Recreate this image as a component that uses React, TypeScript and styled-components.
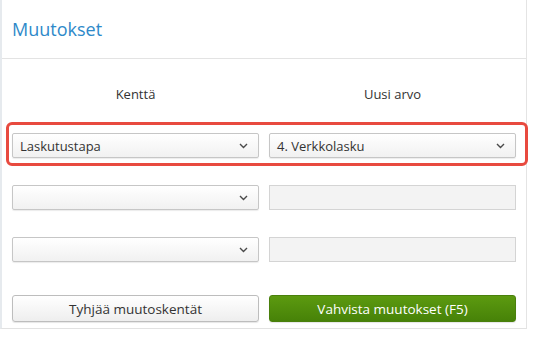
import React, { FC } from 'react';
import styled, { createGlobalStyle } from 'styled-components';

const GlobalStyle = createGlobalStyle`
    html, body {
        margin: 0;
        padding: 0;
        background: #ffffff;
    }
    body {
        font-family: "Open Sans", "Noto Sans", sans-serif;
        color: #333333;
    }
`

const Chevron: FC = () => (
    <svg width="9" height="6" viewBox="0 0 9 6">
        <path d="M1 1 L4.5 4.5 L8 1" fill="none" stroke="#4a4a4a" strokeWidth="1.4" />
    </svg>
)

type SelectProps = { value?: string }

const Select: FC<SelectProps> = ({ value }) => (
    <SelectStyled>
        <SelectText>{value}</SelectText>
        <Chevron />
    </SelectStyled>
)

export const App: FC = () => {
    const rows = [
        { field: 'Laskutustapa', value: '4. Verkkolasku', highlight: true },
        { field: '', value: '', highlight: false },
        { field: '', value: '', highlight: false },
    ]

    return (<>
        <GlobalStyle />
        <PanelStyled>
            <HeaderStyled>
                <TitleStyled>Muutokset</TitleStyled>
            </HeaderStyled>

            <BodyStyled>
                <ColumnHeads>
                    <span>Kenttä</span>
                    <span>Uusi arvo</span>
                </ColumnHeads>

                {rows.map((row, i) => (
                    <RowStyled key={i} $highlight={row.highlight}>
                        <Select value={row.field} />
                        {row.value ? <Select value={row.value} /> : <InputStyled />}
                    </RowStyled>
                ))}

                <ButtonRow>
                    <ButtonStyled>Tyhjää muutoskentät</ButtonStyled>
                    <ButtonStyled $primary>Vahvista muutokset (F5)</ButtonStyled>
                </ButtonRow>
            </BodyStyled>
        </PanelStyled>
    </>)
}

export default App

const PanelStyled = styled.div`
    width: 524px;
    border-left: 2px solid #e6eaee;
    border-right: 1px solid #e4e4e4;
    border-bottom: 1px solid #e2e2e2;
    background: #ffffff;
`

const HeaderStyled = styled.div`
    height: 59px;
    box-sizing: border-box;
    padding: 18px 0 0 10px;
    border-bottom: 1px solid #e3e3e3;
`

const TitleStyled = styled.h2`
    margin: 0;
    font-size: 18px;
    line-height: 22px;
    font-weight: 400;
    color: #2e89c9;
`

const BodyStyled = styled.div`
    padding: 0 10px 6px 10px;
    display: flex;
    flex-direction: column;
`

const ColumnHeads = styled.div`
    display: grid;
    grid-template-columns: 1fr 1fr;
    column-gap: 10px;
    margin-top: 26px;
    font-size: 13px;
    line-height: 18px;
    text-align: center;
    color: #333333;
`

const RowStyled = styled.div<{ $highlight?: boolean }>`
    position: relative;
    display: grid;
    grid-template-columns: 1fr 1fr;
    column-gap: 10px;
    height: 25px;
    margin-top: ${p => p.$highlight ? '30px' : '27px'};

    &::after {
        content: '';
        display: ${p => p.$highlight ? 'block' : 'none'};
        position: absolute;
        left: -6px;
        right: -12px;
        top: -11px;
        bottom: -8px;
        border: 3px solid #e84a3f;
        border-radius: 6px;
        pointer-events: none;
    }
`

const SelectStyled = styled.div`
    display: flex;
    align-items: center;
    justify-content: space-between;
    box-sizing: border-box;
    height: 25px;
    padding: 0 10px 0 7px;
    border: 1px solid #c6c6c6;
    border-radius: 2px;
    background: linear-gradient(#ffffff, #f1f1f1);
    box-shadow: 0 1px 1px rgba(0, 0, 0, 0.08);
    font-size: 13px;
    color: #333333;
`

const SelectText = styled.span`
    white-space: nowrap;
`

const InputStyled = styled.div`
    box-sizing: border-box;
    height: 25px;
    border: 1px solid #d4d4d4;
    background: #f3f3f3;
`

const ButtonRow = styled.div`
    display: grid;
    grid-template-columns: 1fr 1fr;
    column-gap: 10px;
    margin-top: 33px;
`

const ButtonStyled = styled.button<{ $primary?: boolean }>`
    height: 27px;
    padding: 0;
    font-family: inherit;
    font-size: 13.5px;
    border-radius: 3px;
    cursor: pointer;
    color: ${p => p.$primary ? '#ffffff' : '#333333'};
    border: 1px solid ${p => p.$primary ? '#4a800c' : '#bdbdbd'};
    background: ${p => p.$primary
        ? 'linear-gradient(#5c9a10, #478208)'
        : 'linear-gradient(#ffffff, #eeeeee)'};
    box-shadow: 0 1px 1px rgba(0, 0, 0, 0.1);
`
